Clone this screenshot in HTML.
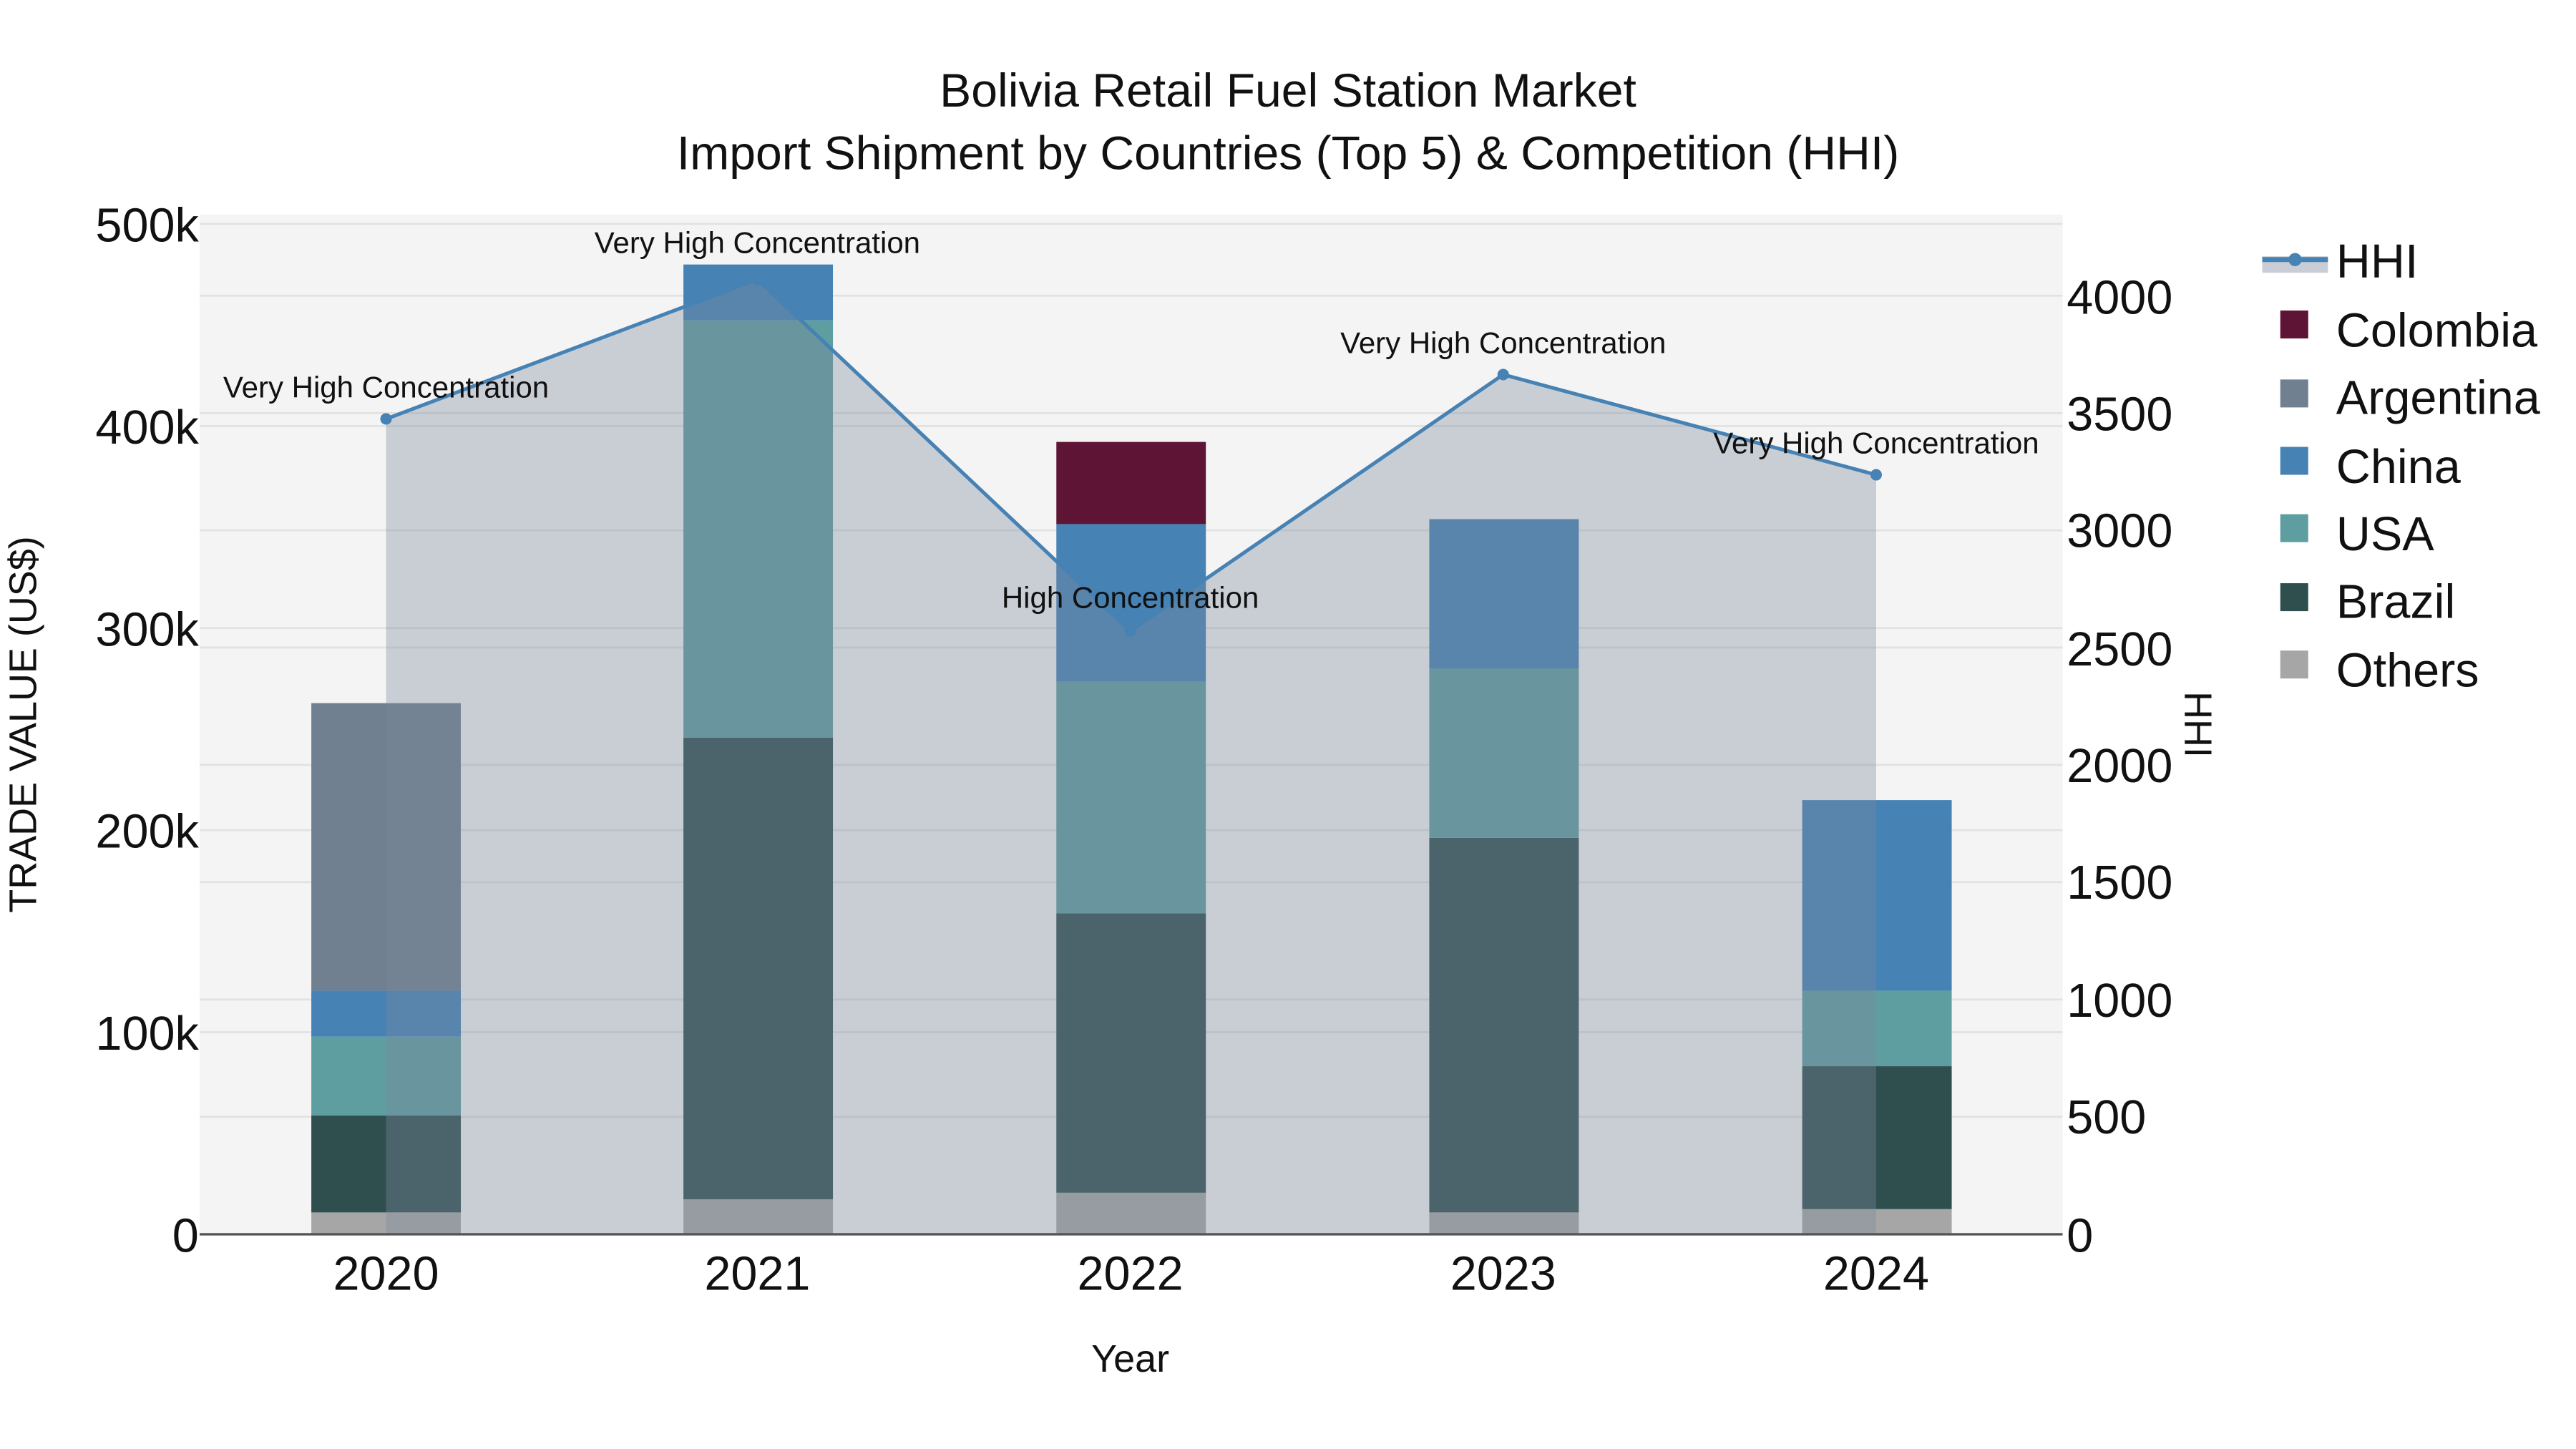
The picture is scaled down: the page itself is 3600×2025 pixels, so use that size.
<!DOCTYPE html>
<html><head><meta charset="utf-8"><style>
html,body{margin:0;padding:0;background:#fff;}
svg{display:block;}
text{font-family:"Liberation Sans",Arial,sans-serif;fill:#111;}
</style></head><body>
<svg width="3600" height="2025" viewBox="0 0 1568 882" xmlns="http://www.w3.org/2000/svg">
<rect width="1568" height="882" fill="#fff"/>
<rect x="121.5" y="130.7" width="1134" height="620.6" fill="#f4f4f4"/>
<g stroke="#e2e2e2" stroke-width="1.2">
<line x1="121.5" x2="1255.5" y1="136.3" y2="136.3"/>
<line x1="121.5" x2="1255.5" y1="259.3" y2="259.3"/>
<line x1="121.5" x2="1255.5" y1="382.3" y2="382.3"/>
<line x1="121.5" x2="1255.5" y1="505.3" y2="505.3"/>
<line x1="121.5" x2="1255.5" y1="628.3" y2="628.3"/>
<line x1="121.5" x2="1255.5" y1="180" y2="180"/>
<line x1="121.5" x2="1255.5" y1="251.4" y2="251.4"/>
<line x1="121.5" x2="1255.5" y1="322.8" y2="322.8"/>
<line x1="121.5" x2="1255.5" y1="394.2" y2="394.2"/>
<line x1="121.5" x2="1255.5" y1="465.6" y2="465.6"/>
<line x1="121.5" x2="1255.5" y1="537" y2="537"/>
<line x1="121.5" x2="1255.5" y1="608.4" y2="608.4"/>
<line x1="121.5" x2="1255.5" y1="679.8" y2="679.8"/>
</g>
<g>
<rect x="189.5" y="738" width="91" height="13.3" fill="#a6a6a6"/>
<rect x="189.5" y="679" width="91" height="59" fill="#2f4f4f"/>
<rect x="189.5" y="631" width="91" height="48" fill="#5f9ea0"/>
<rect x="189.5" y="603" width="91" height="28" fill="#4682b4"/>
<rect x="189.5" y="428" width="91" height="175" fill="#708090"/>

<rect x="416" y="730" width="91" height="21.3" fill="#a6a6a6"/>
<rect x="416" y="449" width="91" height="281" fill="#2f4f4f"/>
<rect x="416" y="195" width="91" height="254" fill="#5f9ea0"/>
<rect x="416" y="161" width="91" height="34" fill="#4682b4"/>

<rect x="643" y="726" width="91" height="25.3" fill="#a6a6a6"/>
<rect x="643" y="556" width="91" height="170" fill="#2f4f4f"/>
<rect x="643" y="415" width="91" height="141" fill="#5f9ea0"/>
<rect x="643" y="319" width="91" height="96" fill="#4682b4"/>
<rect x="643" y="269" width="91" height="50" fill="#5e1434"/>

<rect x="870" y="738" width="91" height="13.3" fill="#a6a6a6"/>
<rect x="870" y="510" width="91" height="228" fill="#2f4f4f"/>
<rect x="870" y="407" width="91" height="103" fill="#5f9ea0"/>
<rect x="870" y="316" width="91" height="91" fill="#4682b4"/>

<rect x="1097" y="736" width="91" height="15.3" fill="#a6a6a6"/>
<rect x="1097" y="649" width="91" height="87" fill="#2f4f4f"/>
<rect x="1097" y="603" width="91" height="46" fill="#5f9ea0"/>
<rect x="1097" y="487" width="91" height="116" fill="#4682b4"/>
</g>
<path d="M235,751.3 L235,255 L461,170 L688,384 L915,228 L1142,289 L1142,751.3 Z" fill="rgba(125,136,156,0.36)"/>
<polyline points="235,255 461,170 688,384 915,228 1142,289" fill="none" stroke="#4682b4" stroke-width="2.2"/>
<g fill="#4682b4">
<circle cx="235" cy="255" r="3.5"/><circle cx="461" cy="170" r="3.5"/><circle cx="688" cy="384" r="3.5"/><circle cx="915" cy="228" r="3.5"/><circle cx="1142" cy="289" r="3.5"/>
</g>
<line x1="121.5" x2="1255.5" y1="751.3" y2="751.3" stroke="#555" stroke-width="1.5"/>
<g font-size="18.3" text-anchor="middle">
<text x="235" y="242">Very High Concentration</text>
<text x="461" y="154">Very High Concentration</text>
<text x="688" y="370">High Concentration</text>
<text x="915" y="215">Very High Concentration</text>
<text x="1142" y="276">Very High Concentration</text>
</g>
<g text-anchor="middle" font-size="28.8">
<text x="784" y="65">Bolivia Retail Fuel Station Market</text>
<text x="784" y="103">Import Shipment by Countries (Top 5) &amp; Competition (HHI)</text>
</g>
<g font-size="29" text-anchor="end">
<text x="121" y="147">500k</text>
<text x="121" y="270">400k</text>
<text x="121" y="393">300k</text>
<text x="121" y="516">200k</text>
<text x="121" y="639">100k</text>
<text x="121" y="762">0</text>
</g>
<g font-size="29" text-anchor="start">
<text x="1258" y="191">4000</text>
<text x="1258" y="262">3500</text>
<text x="1258" y="333">3000</text>
<text x="1258" y="405">2500</text>
<text x="1258" y="476">2000</text>
<text x="1258" y="547">1500</text>
<text x="1258" y="619">1000</text>
<text x="1258" y="690">500</text>
<text x="1258" y="762">0</text>
</g>
<g font-size="29" text-anchor="middle">
<text x="235" y="785">2020</text>
<text x="461" y="785">2021</text>
<text x="688" y="785">2022</text>
<text x="915" y="785">2023</text>
<text x="1142" y="785">2024</text>
</g>
<text x="688" y="835" font-size="23.5" text-anchor="middle">Year</text>
<text transform="translate(22,441) rotate(-90)" font-size="23.5" text-anchor="middle">TRADE VALUE (US$)</text>
<text transform="translate(1330,441) rotate(90)" font-size="23.5" text-anchor="middle">HHI</text>
<rect x="1377" y="156" width="40" height="10" fill="#c9ced6"/>
<line x1="1377" x2="1417" y1="158" y2="158" stroke="#4682b4" stroke-width="3"/>
<circle cx="1397" cy="158" r="4" fill="#4682b4"/>
<rect x="1388" y="189" width="17" height="17" fill="#5e1434"/>
<rect x="1388" y="231" width="17" height="17" fill="#708090"/>
<rect x="1388" y="272" width="17" height="17" fill="#4682b4"/>
<rect x="1388" y="313" width="17" height="17" fill="#5f9ea0"/>
<rect x="1388" y="355" width="17" height="17" fill="#2f4f4f"/>
<rect x="1388" y="396" width="17" height="17" fill="#a6a6a6"/>
<g font-size="29">
<text x="1422" y="169">HHI</text>
<text x="1422" y="211">Colombia</text>
<text x="1422" y="252">Argentina</text>
<text x="1422" y="294">China</text>
<text x="1422" y="335">USA</text>
<text x="1422" y="376">Brazil</text>
<text x="1422" y="418">Others</text>
</g>
</svg>
</body></html>
